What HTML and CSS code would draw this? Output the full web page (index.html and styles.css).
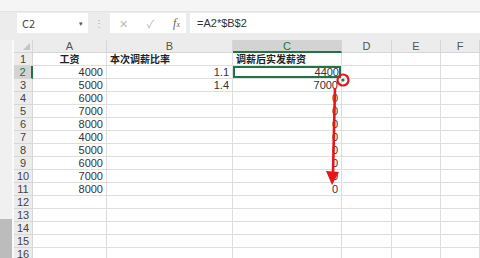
FILE: index.html
```html
<!DOCTYPE html>
<html>

<head>
  <title>调薪表</title>
  <link rel="stylesheet" href="styles.css">
</head>

<body>
  <div id="ribbon"></div>
  <div id="fbar">
    <div class="namebox">C2<span class="drop">&#9662;</span></div>
    <div class="grip">&#8942;</div>
    <div class="btnbox">
      <span class="btn">&#10005;</span>
      <span class="btn">&#10003;</span>
      <span class="btn fx"><i>f</i><small>x</small></span>
    </div>
    <div class="formula">=A2*$B$2</div>
  </div>

  <div id="sheetwrap">
    <div id="scroll"><div class="thumb"></div></div>
    <div id="sheet">
      <div class="corner"><span class="tri"></span></div>
      <div class="ch">A</div><div class="ch">B</div><div class="ch on">C</div><div class="ch">D</div><div class="ch">E</div><div class="ch">F</div>

      <div class="rh">1</div><div class="c b mid">工资</div><div class="c b">本次调薪比率</div><div class="c b">调薪后实发薪资</div><div class="c"></div><div class="c"></div><div class="c"></div>
      <div class="rh on">2</div><div class="c n">4000</div><div class="c n">1.1</div><div class="c n sel">4400</div><div class="c"></div><div class="c"></div><div class="c"></div>
      <div class="rh">3</div><div class="c n">5000</div><div class="c n">1.4</div><div class="c n">7000</div><div class="c"></div><div class="c"></div><div class="c"></div>
      <div class="rh">4</div><div class="c n">6000</div><div class="c"></div><div class="c n">0</div><div class="c"></div><div class="c"></div><div class="c"></div>
      <div class="rh">5</div><div class="c n">7000</div><div class="c"></div><div class="c n">0</div><div class="c"></div><div class="c"></div><div class="c"></div>
      <div class="rh">6</div><div class="c n">8000</div><div class="c"></div><div class="c n">0</div><div class="c"></div><div class="c"></div><div class="c"></div>
      <div class="rh">7</div><div class="c n">4000</div><div class="c"></div><div class="c n">0</div><div class="c"></div><div class="c"></div><div class="c"></div>
      <div class="rh">8</div><div class="c n">5000</div><div class="c"></div><div class="c n">0</div><div class="c"></div><div class="c"></div><div class="c"></div>
      <div class="rh">9</div><div class="c n">6000</div><div class="c"></div><div class="c n">0</div><div class="c"></div><div class="c"></div><div class="c"></div>
      <div class="rh">10</div><div class="c n">7000</div><div class="c"></div><div class="c n">0</div><div class="c"></div><div class="c"></div><div class="c"></div>
      <div class="rh">11</div><div class="c n">8000</div><div class="c"></div><div class="c n">0</div><div class="c"></div><div class="c"></div><div class="c"></div>
      <div class="rh">12</div><div class="c"></div><div class="c"></div><div class="c"></div><div class="c"></div><div class="c"></div><div class="c"></div>
      <div class="rh">13</div><div class="c"></div><div class="c"></div><div class="c"></div><div class="c"></div><div class="c"></div><div class="c"></div>
      <div class="rh">14</div><div class="c"></div><div class="c"></div><div class="c"></div><div class="c"></div><div class="c"></div><div class="c"></div>
      <div class="rh">15</div><div class="c"></div><div class="c"></div><div class="c"></div><div class="c"></div><div class="c"></div><div class="c"></div>
      <div class="rh">16</div><div class="c"></div><div class="c"></div><div class="c"></div><div class="c"></div><div class="c"></div><div class="c"></div>

      <!-- fill handle annotation -->
      <svg class="mark" width="466" height="218" viewBox="0 0 466 218">
        <circle cx="329" cy="40" r="5.5" fill="none" stroke="#e8141a" stroke-width="2.2" />
        <circle cx="329" cy="40" r="1.6" fill="#217346" />
        <path d="M321 48 L319 133" stroke="#e8141a" stroke-width="2.6" fill="none" />
        <path d="M312 131 L325 132 L318 145 Z" fill="#e8141a" />
      </svg>
    </div>
  </div>
</body>

</html>
```

FILE: styles.css
```css
* {
  box-sizing: border-box;
}

body {
  margin: 0;
  width: 480px;
  height: 258px;
  overflow: hidden;
  background: #fff;
  font-family: "Noto Sans CJK SC", "Noto Sans", sans-serif;
  color: #222;
}

#ribbon {
  height: 12px;
  background: #f5f5f5;
  border-bottom: 1px solid #e4e4e4;
}

#fbar {
  height: 28px;
  background: #ececec;
  display: flex;
  align-items: flex-start;
  padding: 1px 0 0 17px;
  font-size: 11px;
  color: #444;
}

.namebox {
  width: 71px;
  height: 20px;
  background: #fff;
  display: flex;
  align-items: center;
  justify-content: space-between;
  padding: 0 5px 0 5px;
}

.drop {
  font-size: 7px;
  color: #555;
}

.grip {
  width: 22px;
  height: 20px;
  line-height: 20px;
  text-align: center;
  color: #aaa;
  font-size: 10px;
}

.btnbox {
  width: 76px;
  height: 20px;
  background: #fff;
  display: flex;
  align-items: center;
  justify-content: space-between;
  padding: 0 6px 0 9px;
}

.btn {
  color: #b9b9b9;
  font-size: 11px;
}

.btn.fx {
  color: #666;
  font-family: "Liberation Serif", serif;
  font-size: 12px;
}

.btn.fx small {
  font-size: 8px;
  font-style: italic;
}

.formula {
  flex: 1;
  height: 20px;
  margin-left: 4px;
  background: #fff;
  line-height: 20px;
  padding-left: 7px;
  font-family: "Liberation Sans", sans-serif;
  color: #333;
}

#sheetwrap {
  display: flex;
  height: 218px;
}

#scroll {
  width: 14px;
  background: #f0f0f0;
  border-right: 2px solid #fafafa;
  display: flex;
  flex-direction: column;
  justify-content: flex-end;
}

.thumb {
  height: 39px;
  background: #bcbcbc;
}

#sheet {
  flex: 1;
  position: relative;
  display: grid;
  grid-template-columns: 19px 74px 126px 109px 50px 49px 1fr;
  grid-auto-rows: 13px;
  font-size: 11px;
  line-height: 12px;
}

.corner {
  background: #ececec;
  border-right: 1px solid #d6d6d6;
  border-bottom: 1px solid #d6d6d6;
  position: relative;
}

.tri {
  position: absolute;
  right: 2px;
  bottom: 2px;
  width: 0;
  height: 0;
  border-left: 7px solid transparent;
  border-bottom: 7px solid #c4c4c4;
}

.ch {
  background: #ececec;
  border-right: 1px solid #d6d6d6;
  border-bottom: 1px solid #d6d6d6;
  text-align: center;
  color: #555;
  font-family: "Liberation Sans", sans-serif;
  font-size: 11px;
}

.ch.on {
  background: #d3d3d3;
  border-bottom: 2px solid #217346;
  color: #217346;
}

.rh {
  background: #ececec;
  border-right: 1px solid #d6d6d6;
  border-bottom: 1px solid #d6d6d6;
  text-align: center;
  color: #444;
  font-family: "Liberation Sans", sans-serif;
  font-size: 11px;
}

.rh.on {
  background: #d3d3d3;
  border-right: 2px solid #217346;
  color: #217346;
}

.c {
  border-right: 1px solid #dedede;
  border-bottom: 1px solid #dedede;
  padding: 0 3px;
  white-space: nowrap;
  overflow: hidden;
}

.c.n {
  text-align: right;
  font-family: "Liberation Sans", sans-serif;
  color: #333;
}

.c.b {
  font-weight: bold;
  font-size: 10px;
  overflow: visible;
  line-height: 12px;
}

.c.mid {
  text-align: center;
}

.c.sel {
  box-shadow: inset 0 0 0 2px #217346;
  padding-right: 2px;
}

.mark {
  position: absolute;
  left: 0;
  top: 0;
  pointer-events: none;
}
```
